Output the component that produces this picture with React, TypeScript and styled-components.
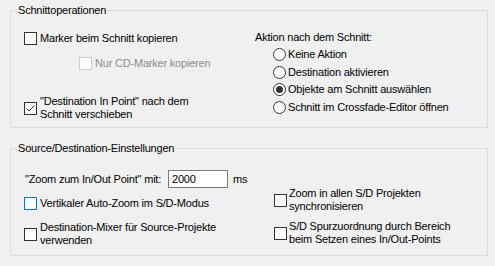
import React, { FC, ReactNode } from 'react'
import styled, { createGlobalStyle, css } from 'styled-components'

const GlobalStyle = createGlobalStyle`
    html, body {
        margin: 0;
        padding: 0;
        background: #f0f0f0;
    }

    body {
        width: 495px;
        height: 266px;
        overflow: hidden;
        font-family: "Liberation Sans", Arial, sans-serif;
        font-size: 11px;
        letter-spacing: -0.2px;
        color: #000;
    }
`

interface ICheck {
	checked?: boolean
	disabled?: boolean
	focused?: boolean
	children?: ReactNode
	gap?: number
}

const CheckItem: FC<ICheck> = ({ checked, disabled, focused, children, gap = 3 }) => (
	<CheckRow $disabled={disabled} $gap={gap}>
		<CheckBox $disabled={disabled} $focused={focused}>
			{checked && (
				<svg width='11' height='11' viewBox='0 0 11 11'>
					<polyline points='1.5,5.5 4,8 9.5,2.5' fill='none' stroke='#333' strokeWidth='1' />
				</svg>
			)}
		</CheckBox>
		<span>{children}</span>
	</CheckRow>
)

const RadioItem: FC<{ selected?: boolean, children: ReactNode }> = ({ selected, children }) => (
	<RadioRow>
		<RadioDot $selected={selected} />
		<span>{children}</span>
	</RadioRow>
)

export default function App() {
	return (
		<>
			<GlobalStyle />
			<Page>
				<Group $height={118}>
					<Legend>Schnittoperationen</Legend>
					<CutBody>
						<Column>
							<Spacer $h={15} />
							<CheckItem>Marker beim Schnitt kopieren</CheckItem>
							<Indent $top={12}>
								<CheckItem disabled>Nur CD-Marker kopieren</CheckItem>
							</Indent>
							<Spacer $h={25} />
							<CheckItem checked>
								"Destination In Point" nach dem<br />Schnitt verschieben
							</CheckItem>
						</Column>
						<Column>
							<Spacer $h={14} />
							<Caption>Aktion nach dem Schnitt:</Caption>
							<RadioList>
								<RadioItem>Keine Aktion</RadioItem>
								<RadioItem>Destination aktivieren</RadioItem>
								<RadioItem selected>Objekte am Schnitt auswählen</RadioItem>
								<RadioItem>Schnitt im Crossfade-Editor öffnen</RadioItem>
							</RadioList>
						</Column>
					</CutBody>
				</Group>

				<Group $height={108} $top={20}>
					<Legend>Source/Destination-Einstellungen</Legend>
					<SourceBody>
						<Column>
							<ZoomRow>
								<ZoomLabel>"Zoom zum In/Out Point" mit:</ZoomLabel>
								<NumberInput defaultValue='2000' />
								<Unit>ms</Unit>
							</ZoomRow>
							<Spacer $h={9} />
							<CheckItem focused>Vertikaler Auto-Zoom im S/D-Modus</CheckItem>
							<Spacer $h={11} />
							<CheckItem>
								Destination-Mixer für Source-Projekte<br />verwenden
							</CheckItem>
						</Column>
						<RightColumn>
							<CheckItem gap={2}>
								Zoom in allen S/D Projekten<br />synchronisieren
							</CheckItem>
							<CheckItem gap={2}>
								S/D Spurzuordnung durch Bereich<br />beim Setzen eines In/Out-Points
							</CheckItem>
						</RightColumn>
					</SourceBody>
				</Group>
			</Page>
		</>
	)
}

const Page = styled.div`
    padding: 10px 7px 0 10px;
    display: flex;
    flex-direction: column;
`

const Group = styled.div<{ $height: number, $top?: number }>`
    box-sizing: border-box;
    width: 478px;
    height: ${p => p.$height}px;
    margin-top: ${p => p.$top || 0}px;
    border: 1px solid #dcdcdc;
`

const Legend = styled.div`
    width: fit-content;
    margin: -7px 0 0 6px;
    padding: 0 1px;
    line-height: 13px;
    background: #f0f0f0;
`

const CutBody = styled.div`
    display: grid;
    grid-template-columns: 231px 1fr;
    padding-left: 13px;
`

const SourceBody = styled.div`
    display: grid;
    grid-template-columns: 250px 1fr;
    padding-left: 13px;
`

const Column = styled.div`
    display: flex;
    flex-direction: column;
    align-items: flex-start;
`

const RightColumn = styled.div`
    display: flex;
    flex-direction: column;
    gap: 7px;
    padding-top: 32px;
`

const Spacer = styled.div<{ $h: number }>`
    height: ${p => p.$h}px;
`

const Indent = styled.div<{ $top: number }>`
    margin-top: ${p => p.$top}px;
    padding-left: 55px;
`

const CheckRow = styled.label<{ $disabled?: boolean, $gap: number }>`
    display: flex;
    align-items: center;
    gap: ${p => p.$gap}px;
    line-height: 13px;
    white-space: nowrap;
    color: ${p => (p.$disabled ? '#8d8d8d' : '#000')};
`

const CheckBox = styled.span<{ $disabled?: boolean, $focused?: boolean }>`
    box-sizing: border-box;
    flex: none;
    width: 13px;
    height: 13px;
    display: flex;
    align-items: center;
    justify-content: center;
    background: #fff;
    border: 1px solid #333;

    ${p => p.$disabled && css`
        border-color: #cccccc;
    `}

    ${p => p.$focused && css`
        border-color: #0078d7;
    `}
`

const Caption = styled.div`
    line-height: 13px;
`

const RadioList = styled.div`
    display: flex;
    flex-direction: column;
    gap: 4.5px;
    margin-top: 4px;
    padding-left: 18px;
`

const RadioRow = styled.label`
    display: flex;
    align-items: center;
    gap: 2px;
    line-height: 13px;
    white-space: nowrap;
`

const RadioDot = styled.span<{ $selected?: boolean }>`
    box-sizing: border-box;
    flex: none;
    width: 13px;
    height: 13px;
    border-radius: 50%;
    border: 1px solid #333;
    background: #fff;
    display: flex;
    align-items: center;
    justify-content: center;

    &::after {
        content: '';
        width: 7px;
        height: 7px;
        border-radius: 50%;
        background: #333;
        display: ${p => (p.$selected ? 'block' : 'none')};
    }
`

const ZoomRow = styled.div`
    display: flex;
    align-items: center;
    margin-top: 15px;
    padding-left: 1px;
`

const ZoomLabel = styled.span`
    width: 143px;
    white-space: nowrap;
`

const NumberInput = styled.input`
    box-sizing: border-box;
    width: 60px;
    height: 18px;
    padding: 0 3px;
    border: 1px solid #7a7a7a;
    background: #fff;
    font-family: inherit;
    font-size: 11px;
    letter-spacing: inherit;
    color: #000;
    outline: none;
`

const Unit = styled.span`
    margin-left: 5px;
`
